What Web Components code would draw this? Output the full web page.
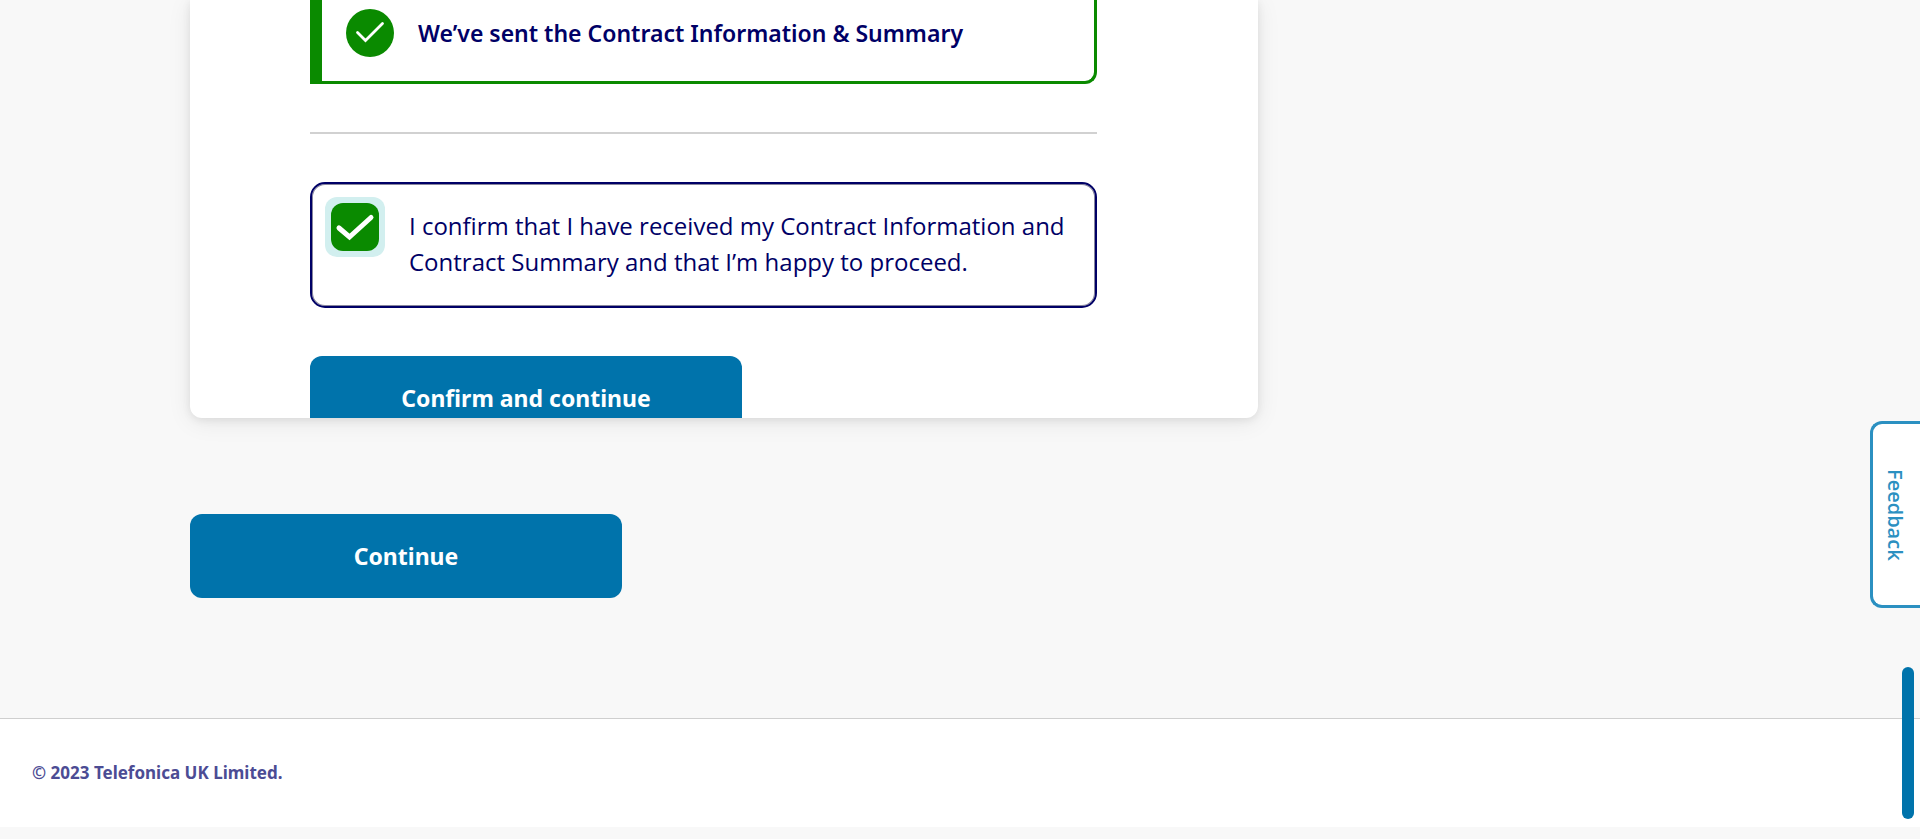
<!DOCTYPE html>
<html lang="en">
<head>
<meta charset="utf-8">
<meta name="viewport" content="width=device-width, initial-scale=1">
<title>Contract Information and Summary</title>
<style>
  :root {
    --navy: #000066;
    --green: #0a8a00;
    --blue: #0073ab;
    --radius: 12px;
  }
  body {
    margin: 0;
    background: #f8f8f8;
    color: var(--navy);
    font-family: "Open Sans", "Noto Sans", sans-serif;
  }
</style>
</head>
<body>
<order-page></order-page>

<template id="order-page">
  <style>
    :host { display: block; padding-bottom: 12px; }
    main {
      box-sizing: border-box;
      max-width: 1540px;
      margin: 0 auto;
      padding-bottom: 120px;
    }
    hr {
      border: 0;
      height: 2px;
      margin: 48px 0;
      background: #d1d1d1;
    }
    confirm-check { margin-bottom: 48px; }
    content-card { margin-bottom: 96px; }
  </style>
  <main>
    <content-card>
      <success-alert>We’ve sent the Contract Information &amp; Summary</success-alert>
      <hr>
      <confirm-check>I confirm that I have received my Contract Information and Contract Summary and that I’m happy to proceed.</confirm-check>
      <action-button>Confirm and continue</action-button>
    </content-card>
    <action-button>Continue</action-button>
  </main>
  <page-footer>© 2023 Telefonica UK Limited.</page-footer>
  <feedback-tab>Feedback</feedback-tab>
  <scroll-thumb></scroll-thumb>
</template>

<template id="content-card">
  <style>
    :host {
      display: block;
      box-sizing: border-box;
      max-width: 1068px;
      padding: 0 161px 0 120px;
      overflow: hidden;
      background: #fff;
      border-radius: 0 0 var(--radius) var(--radius);
      box-shadow: 0 4px 24px rgba(0, 0, 0, .08), 0 2px 8px rgba(0, 0, 0, .08);
    }
    /* The last control runs past the card's lower edge and is clipped there. */
    .body { margin-bottom: -22px; }
  </style>
  <div class="body"><slot></slot></div>
</template>

<template id="success-alert">
  <style>
    :host {
      display: flex;
      align-items: center;
      gap: 24px;
      padding: 9px 24px 24px;
      border: solid var(--green);
      border-width: 0 3px 3px 12px;
      border-radius: 0 0 var(--radius) 0;
      font: 600 23px/36px "Noto Sans", sans-serif;
    }
    svg { flex: none; width: 48px; height: 48px; }
  </style>
  <svg viewBox="0 0 48 48" aria-hidden="true">
    <circle cx="24" cy="24" r="24" fill="#0a8a00"/>
    <path d="M11.500 23.500L19.500 31.500L36.500 14.500" fill="none" stroke="#fff" stroke-width="2.800" stroke-linecap="round"/>
  </svg>
  <span><slot></slot></span>
</template>

<template id="confirm-check">
  <style>
    :host {
      display: block;
      border: 2px solid var(--navy);
      border-radius: 15px;
      box-shadow: inset 0 0 0 1px #88869c;
      font-size: 24px;
      line-height: 36px;
    }
    label {
      display: flex;
      align-items: flex-start;
      gap: 24px;
      padding: 13px 24px 26px 13px;
    }
    .box {
      display: grid;
      flex: none;
      padding: 6px;
      border-radius: var(--radius);
      background: #d2efef;
    }
    input, svg { grid-area: 1 / 1; width: 48px; height: 48px; margin: 0; }
    input {
      appearance: none;
      background: var(--green);
      border-radius: var(--radius);
    }
    svg { visibility: hidden; pointer-events: none; }
    input:checked + svg { visibility: visible; }
    .text { padding-top: 11px; }
  </style>
  <label>
    <span class="box">
      <input type="checkbox" checked>
      <svg viewBox="0 0 48 48" aria-hidden="true">
        <path d="M8 25L18.500 34L40 14.500" fill="none" stroke="#fff" stroke-width="5" stroke-linecap="round" stroke-linejoin="miter"/>
      </svg>
    </span>
    <span class="text"><slot></slot></span>
  </label>
</template>

<template id="action-button">
  <style>
    :host { display: block; }
    button {
      display: block;
      width: 100%;
      max-width: 432px;
      padding: 24px;
      border: 0;
      border-radius: var(--radius);
      background: var(--blue);
      color: #fff;
      font: 700 23px/36px "Noto Sans", sans-serif;
      cursor: pointer;
    }
  </style>
  <button type="button"><slot></slot></button>
</template>

<template id="page-footer">
  <style>
    :host { display: block; }
    footer {
      padding: 42px 32px;
      border-top: 1px solid #cfcfcf;
      background: #fff;
    }
    p { margin: 0; color: #4c4c94; font: 700 17px/24px "Noto Sans", sans-serif; }
  </style>
  <footer><p><slot></slot></p></footer>
</template>

<template id="feedback-tab">
  <style>
    :host { display: block; position: fixed; right: 0; top: 421px; }
    button {
      display: block;
      box-sizing: border-box;
      width: 50px;
      height: 187px;
      padding: 0 4px 0 0;
      border: 3px solid #2b90c1;
      border-right: 0;
      border-radius: var(--radius) 0 0 var(--radius);
      background: #fff;
      color: #2b90c1;
      font: 600 20px/24px "Open Sans", sans-serif;
      writing-mode: vertical-rl;
      cursor: pointer;
    }
  </style>
  <button type="button"><slot></slot></button>
</template>

<template id="scroll-thumb">
  <style>
    :host {
      display: block;
      position: fixed;
      right: 6px;
      bottom: 20px;
      width: 12px;
      height: 152px;
      border-radius: 6px;
      background: var(--blue);
    }
  </style>
</template>

<script>
  class TemplateElement extends HTMLElement {
    constructor() {
      super();
      const template = document.getElementById(this.localName);
      this.attachShadow({ mode: "open" }).append(template.content.cloneNode(true));
    }
  }
  const names = ["content-card", "success-alert", "confirm-check", "action-button",
    "page-footer", "feedback-tab", "scroll-thumb", "order-page"];
  for (const name of names) {
    customElements.define(name, class extends TemplateElement {});
  }
</script>
</body>
</html>
